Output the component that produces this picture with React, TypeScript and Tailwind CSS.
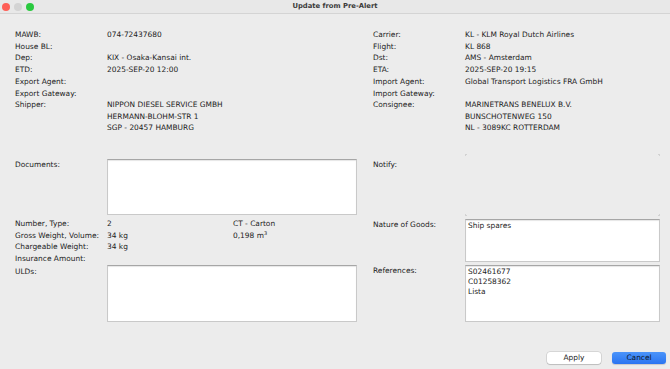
import React from 'react';

type Row = { label: string; value?: string | string[] };

const LEFT_ROWS: Row[] = [
  { label: 'MAWB:', value: '074-72437680' },
  { label: 'House BL:' },
  { label: 'Dep:', value: 'KIX - Osaka-Kansai int.' },
  { label: 'ETD:', value: '2025-SEP-20 12:00' },
  { label: 'Export Agent:' },
  { label: 'Export Gateway:' },
  { label: 'Shipper:', value: ['NIPPON DIESEL SERVICE GMBH', 'HERMANN-BLOHM-STR 1', 'SGP - 20457 HAMBURG'] },
];

const RIGHT_ROWS: Row[] = [
  { label: 'Carrier:', value: 'KL - KLM Royal Dutch Airlines' },
  { label: 'Flight:', value: 'KL 868' },
  { label: 'Dst:', value: 'AMS - Amsterdam' },
  { label: 'ETA:', value: '2025-SEP-20 19:15' },
  { label: 'Import Agent:', value: 'Global Transport Logistics FRA GmbH' },
  { label: 'Import Gateway:' },
  { label: 'Consignee:', value: ['MARINETRANS BENELUX B.V.', 'BUNSCHOTENWEG 150', 'NL - 3089KC ROTTERDAM'] },
];

function Field({ row }: { row: Row }) {
  const lines = Array.isArray(row.value) ? row.value : [row.value ?? ''];
  return (
    <div className="flex leading-[11.7px]">
      <div className="w-[92px] shrink-0">{row.label}</div>
      <div className="flex-1">
        {lines.map((l, i) => (
          <div key={i} className="h-[11.3px] whitespace-nowrap">{l}</div>
        ))}
      </div>
    </div>
  );
}

function TextBox({ className, lines = [] }: { className: string; lines?: string[] }) {
  return (
    <div
      className={`flex-1 bg-white border border-[#c9c9c9] border-t-[#a6a6a6] shadow-[inset_0_1px_1px_rgba(0,0,0,0.10)] pl-[2px] pt-[1px] leading-[10px] ${className}`}
    >
      {lines.map((l, i) => (
        <div key={i}>{l}</div>
      ))}
    </div>
  );
}

// faint corner ticks of a borderless text area
function Ticks() {
  return (
    <>
      <span className="absolute left-0 top-0 w-[2px] h-[2px] border-l border-t border-[#d2d2d2]" />
      <span className="absolute right-0 top-0 w-[2px] h-[2px] border-r border-t border-[#d2d2d2]" />
      <span className="absolute left-0 bottom-0 w-[2px] h-[2px] border-l border-b border-[#d2d2d2]" />
      <span className="absolute right-0 bottom-0 w-[2px] h-[2px] border-r border-b border-[#d2d2d2]" />
    </>
  );
}

export default function App() {
  return (
    <div className="w-[670px] h-[369px] bg-[#ececec] flex flex-col overflow-hidden font-['DejaVu_Sans',sans-serif] text-[7.45px] text-[#1c1c1c]">
      {/* title bar */}
      <div className="h-[14px] grid grid-cols-[1fr_auto_1fr] items-center bg-[#e8e8e8] border-b border-[#d4d4d4]">
        <div className="flex items-center gap-[4px] pl-[2px]">
          <span className="w-[8px] h-[8px] rounded-full bg-[#fe5f57]" />
          <span className="w-[8px] h-[8px] rounded-full bg-[#d3d3d3]" />
          <span className="w-[8px] h-[8px] rounded-full bg-[#2ac93f]" />
        </div>
        <div className="font-bold text-[6.8px] text-[#3b3b3b]">Update from Pre-Alert</div>
        <div />
      </div>

      <div className="flex pt-[15px] pl-[15px] pr-[10px] gap-[16px]">
        {/* left column */}
        <div className="w-[342px] flex flex-col">
          {LEFT_ROWS.map((r) => (
            <Field key={r.label} row={r} />
          ))}
          <div className="flex mt-[25px] leading-[11.7px]">
            <div className="w-[92px] shrink-0 pt-[1px]">Documents:</div>
            <TextBox className="mt-[1px] h-[56px]" />
          </div>
          <div className="mt-[3px] leading-[11.7px]">
            <div className="flex h-[11.7px]">
              <div className="w-[92px]">Number, Type:</div>
              <div className="w-[126px]">2</div>
              <div>CT - Carton</div>
            </div>
            <div className="flex h-[11.7px]">
              <div className="w-[92px]">Gross Weight, Volume:</div>
              <div className="w-[126px]">34 kg</div>
              <div>
                0,198 m<sup className="text-[5px]">3</sup>
              </div>
            </div>
            <div className="flex h-[11.7px]">
              <div className="w-[92px]">Chargeable Weight:</div>
              <div>34 kg</div>
            </div>
            <div className="flex h-[11.7px]">
              <div className="w-[92px]">Insurance Amount:</div>
            </div>
          </div>
          <div className="flex leading-[11.7px]">
            <div className="w-[92px] shrink-0 pt-[1px]">ULDs:</div>
            <TextBox className="h-[57px]" />
          </div>
        </div>

        {/* right column */}
        <div className="w-[287px] flex flex-col">
          {RIGHT_ROWS.map((r) => (
            <Field key={r.label} row={r} />
          ))}
          <div className="flex mt-[21px] h-[62px] leading-[11.7px]">
            <div className="w-[92px] shrink-0 pt-[5px]">Notify:</div>
            <div className="relative flex-1">
              <Ticks />
            </div>
          </div>
          <div className="flex mt-[2px] leading-[11.7px]">
            <div className="w-[92px] shrink-0 pt-[1px]">Nature of Goods:</div>
            <TextBox className="mt-[1px] h-[43px]" lines={['Ship spares']} />
          </div>
          <div className="flex mt-[2px] leading-[11.7px]">
            <div className="w-[92px] shrink-0 pt-[1px]">References:</div>
            <TextBox className="mt-[1px] h-[57px]" lines={['S02461677', 'C01258362', 'Lista']} />
          </div>
        </div>
      </div>

      {/* buttons */}
      <div className="mt-auto flex justify-end gap-[11px] pr-[4px] pb-[5px]">
        <button className="w-[54px] h-[12px] rounded-[3px] bg-white shadow-[0_0_0_0.5px_rgba(0,0,0,0.18),0_1px_1px_rgba(0,0,0,0.12)] text-[7.45px] leading-[12px] text-[#1c1c1c]">
          Apply
        </button>
        <button className="w-[54px] h-[12px] rounded-[3px] bg-gradient-to-b from-[#4b94fa] to-[#2a74f1] shadow-[0_1px_1px_rgba(0,0,0,0.15)] text-[7.45px] leading-[12px] text-[#101828]">
          Cancel
        </button>
      </div>
    </div>
  );
}
